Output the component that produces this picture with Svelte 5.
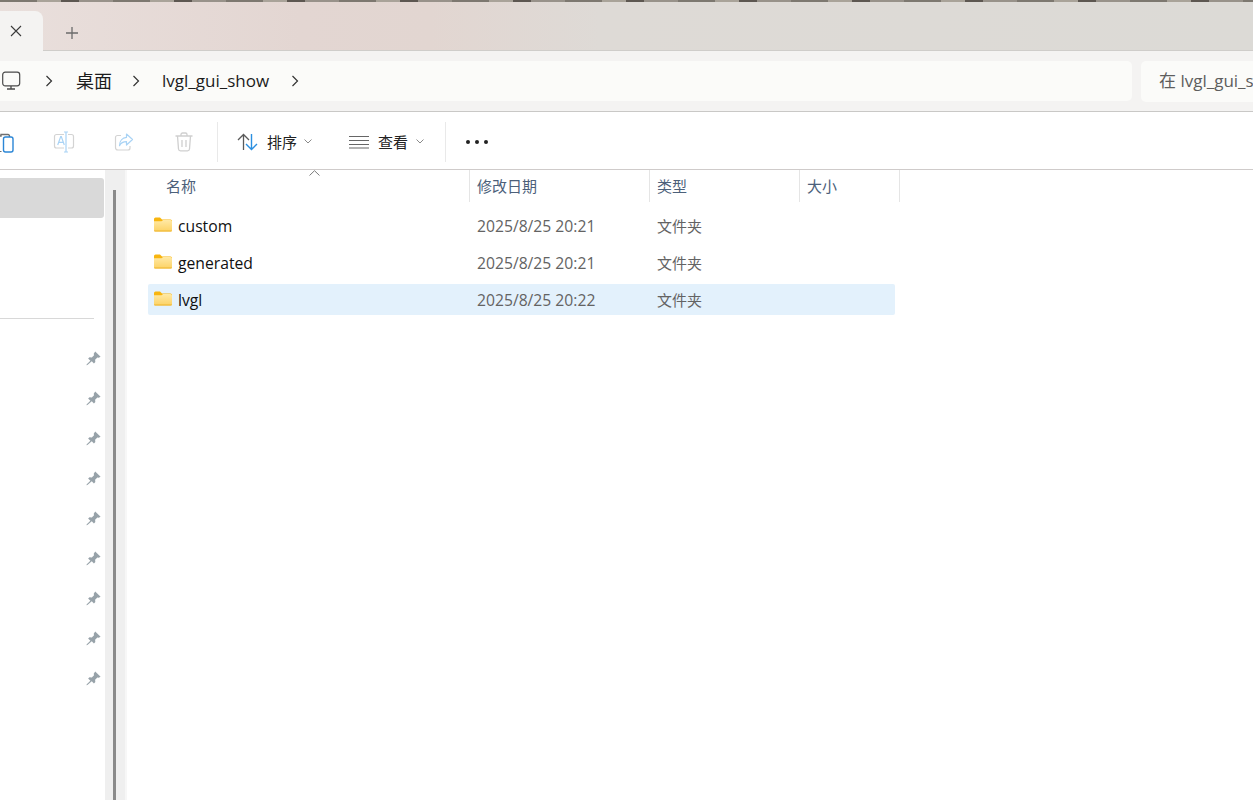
<script>
  const rows = [
    { name: 'custom', date: '2025/8/25 20:21' },
    { name: 'generated', date: '2025/8/25 20:21' },
    { name: 'lvgl', date: '2025/8/25 20:22', selected: true }
  ];
  const cols = [
    { label: '名称', cls: 'c-name' },
    { label: '修改日期', cls: 'c-date' },
    { label: '类型', cls: 'c-type' },
    { label: '大小', cls: 'c-size' }
  ];
  const pins = Array.from({ length: 9 }, (_, i) => i);
</script>

<div class="window">
  <div class="strip"></div>
  <div class="titlebar">
    <div class="tab">
      <svg class="close" width="12" height="12" viewBox="0 0 12 12"><path d="M1 1l10 10M11 1L1 11" stroke="#3a3a3a" stroke-width="1.1" fill="none"/></svg>
    </div>
    <div class="newtab">
      <svg width="14" height="14" viewBox="0 0 14 14"><path d="M7 1v12M1 7h12" stroke="#6b6b6b" stroke-width="1.3" fill="none"/></svg>
    </div>
  </div>

  <div class="addressrow">
    <div class="address">
      <svg class="pc" width="20" height="20" viewBox="0 0 20 20"><rect x="1.7" y="1.2" width="17" height="13.6" rx="2.5" fill="none" stroke="#4a4a4a" stroke-width="1.2"/><path d="M10 15v2.6M6 18h8" stroke="#4a4a4a" stroke-width="1.3" fill="none"/></svg>
      <svg class="chev first" width="8" height="12" viewBox="0 0 8 12"><path d="M1.5 1l5 5-5 5" stroke="#333" stroke-width="1.2" fill="none"/></svg>
      <span class="crumb desk">桌面</span>
      <svg class="chev second" width="8" height="12" viewBox="0 0 8 12"><path d="M1.5 1l5 5-5 5" stroke="#333" stroke-width="1.2" fill="none"/></svg>
      <span class="crumb show">lvgl_gui_show</span>
      <svg class="chev third" width="8" height="12" viewBox="0 0 8 12"><path d="M1.5 1l5 5-5 5" stroke="#333" stroke-width="1.2" fill="none"/></svg>
    </div>
    <div class="search">在 lvgl_gui_show 中搜索</div>
  </div>

  <div class="toolbar">
    <div class="tool">
      <svg width="20" height="22" viewBox="0 0 20 22"><path d="M6 5h1V3.500h7a1.500 1.500 0 0 1 1.500 1.500v1" stroke="#6f6f6f" stroke-width="1.4" fill="none"/><rect x="9.500" y="6" width="9.500" height="15" rx="2" fill="none" stroke="#2b86d6" stroke-width="1.4"/><path d="M6 20.500h1.500" stroke="#6f6f6f" stroke-width="1.2"/></svg>
    </div>
    <div class="tool">
      <svg width="22" height="22" viewBox="0 0 22 22"><path d="M11 3.500H3.500a2 2 0 0 0-2 2v9.500a2 2 0 0 0 2 2H11M15 3.500h3.500a2 2 0 0 1 2 2v9.500a2 2 0 0 1-2 2H15" stroke="#d3d3d3" stroke-width="1.2" fill="none"/><path d="M13 1v20M11 1h4M11 21h4" stroke="#a9d3f5" stroke-width="1.2" fill="none"/><path d="M4.700 14l3-8.500h.6l3 8.500M5.700 11.300h5" stroke="#a9d3f5" stroke-width="1.200" fill="none"/></svg>
    </div>
    <div class="tool">
      <svg width="20" height="20" viewBox="0 0 20 20"><path d="M7 3.500H3.500a2 2 0 0 0-2 2v10a2.500 2.500 0 0 0 2.500 2.500h10a2 2 0 0 0 2-2v-2" stroke="#d3d3d3" stroke-width="1.2" fill="none"/><path d="M12.500 2l6 5.500-6 5.500V9.700c-3 0-5.500 1-7 4 0-5 3-8 7-8.300z" stroke="#a9d3f5" stroke-width="1.200" fill="none" stroke-linejoin="round"/></svg>
    </div>
    <div class="tool">
      <svg width="18" height="20" viewBox="0 0 18 20"><path d="M0.500 4h17M6 4V2.500a1.500 1.500 0 0 1 1.500-1.500h3a1.500 1.500 0 0 1 1.500 1.500V4M2.500 4l1 13a2 2 0 0 0 2 1.800h7a2 2 0 0 0 2-1.800l1-13M7 8v7M11 8v7" stroke="#cfcfcf" stroke-width="1.3" fill="none"/></svg>
    </div>
    <div class="sep s1"></div>
    <div class="menu sort">
      <svg width="21" height="18" viewBox="0 0 21 18"><path d="M6.500 17V1.500M1 7l5.500-5.500L12 7" stroke="#5a5a5a" stroke-width="1.3" fill="none"/><path d="M14.500 1v15.500M9 11l5.500 5.500L20 11" stroke="#2b8fe0" stroke-width="1.4" fill="none"/></svg>
      <span>排序</span>
      <svg class="caret" width="8" height="5" viewBox="0 0 8 5"><path d="M.5.500L4 4 7.500.500" stroke="#8a8a8a" fill="none"/></svg>
    </div>
    <div class="menu view">
      <svg width="20" height="14" viewBox="0 0 20 14"><path d="M0 1.500h20M0 5.500h20M0 9.500h20M0 13h20" stroke="#666" stroke-width="1.100" fill="none"/></svg>
      <span>查看</span>
      <svg class="caret" width="8" height="5" viewBox="0 0 8 5"><path d="M.5.500L4 4 7.500.500" stroke="#8a8a8a" fill="none"/></svg>
    </div>
    <div class="sep s2"></div>
    <div class="dots"><i></i><i></i><i></i></div>
  </div>

  <div class="body">
    <aside class="sidebar">
      <div class="navsel"></div>
      <div class="rule"></div>
      <div class="pins">
        {#each pins as p (p)}
          <div class="pinrow">
            <svg width="15" height="15" viewBox="0 0 14 14"><path d="M8.600.400l5 5-1.700 1-1.300-.3-2.100 2.100.2 2.100-1.300 1.300-2-2.100L1.300 13l-.9.300.3-.9 3.400-3.300-2.100-2 1.300-1.300 2.100.2 2.100-2.100-.3-1.300z" fill="#97a2a9"/></svg>
          </div>
        {/each}
      </div>
    </aside>
    <div class="scrolltrack"><div class="thumb"></div></div>
    <main class="list">
      <div class="sortarrow">
        <svg width="11" height="6" viewBox="0 0 11 6"><path d="M.5 5.500L5.500.700l5 4.800" stroke="#7a7a7a" fill="none"/></svg>
      </div>
      <div class="head">
        {#each cols as c (c.label)}
          <div class="hcell {c.cls}">{c.label}</div>
        {/each}
      </div>
      <div class="rows">
        {#each rows as r (r.name)}
          <div class="row" class:selected={r.selected}>
            <svg class="folder" width="18" height="15" viewBox="0 0 18 15">
              <defs>
                <linearGradient id="fold-{r.name}" x1="0" y1="0" x2="0" y2="1">
                  <stop offset="0" stop-color="#ffe9a6"/>
                  <stop offset="1" stop-color="#fcd264"/>
                </linearGradient>
              </defs>
              <path d="M0 2a1.500 1.500 0 0 1 1.500-1.500H6L8 2.500h8.500A1.500 1.500 0 0 1 18 4v2H0z" fill="#f8b50f"/>
              <path d="M0 4.200h7.500L9.200 3H16.500A1.500 1.500 0 0 1 18 4.500v8.700a1.300 1.300 0 0 1-1.300 1.300H1.300A1.300 1.300 0 0 1 0 13.200z" fill="url(#fold-{r.name})"/>
              <path d="M0 13.500h18v.2a1 1 0 0 1-1 .8H1a1 1 0 0 1-1-.8z" fill="#eeb32c"/>
            </svg>
            <span class="name">{r.name}</span>
            <span class="date">{r.date}</span>
            <span class="type">文件夹</span>
          </div>
        {/each}
      </div>
    </main>
  </div>
</div>

<style>
  :global(body) { margin: 0; overflow: hidden; background: #fff; }
  .window {
    width: 1253px;
    height: 800px;
    overflow: hidden;
    display: flex;
    flex-direction: column;
    font-family: "Open Sans", "Noto Sans CJK SC", sans-serif;
    font-size: 15.7px;
    color: #1a1a1a;
  }
  .strip {
    height: 2px;
    background: repeating-linear-gradient(90deg, #7d7870 0 37px, #a9a399 37px 61px, #5d5751 61px 79px, #98928a 79px 113px);
  }
  .titlebar {
    height: 49px;
    box-sizing: border-box;
    border-bottom: 1px solid #cfcdca;
    display: flex;
    padding-top: 9px;
    background: linear-gradient(90deg, #e9dfdc 0, #e3d6d2 300px, #e2d6d1 430px, #dedad6 600px, #dcdad6 100%);
  }
  .tab {
    width: 43px;
    height: 40px;
    background: #f4f3f2;
    border-radius: 0 8px 0 0;
    display: flex;
    align-items: flex-start;
    justify-content: flex-start;
    position: relative;
    z-index: 1;
  }
  .close { margin: 14px 0 0 10px; }
  .newtab { margin: 12px 0 0 22px; height: 14px; }
  .addressrow {
    height: 61px;
    box-sizing: border-box;
    border-bottom: 1px solid #c9c8c6;
    background: #f4f3f2;
    padding-top: 10px;
    display: flex;
    gap: 9px;
  }
  .address {
    width: 1132px;
    height: 40px;
    background: #fbfbf9;
    border-radius: 0 5px 5px 0;
    display: flex;
    align-items: center;
    flex: none;
  }
  .pc { margin-left: 1px; }
  .chev { margin-left: 24px; }
  .chev.second { margin-left: 20px; }
  .chev.third { margin-left: 22px; }
  .crumb { font-size: 17px; line-height: 24px; color: #1c1c1c; }
  .desk { margin-left: 23px; font-size: 18px; }
  .show { margin-left: 22px; }
  .search {
    flex: none;
    width: 300px;
    height: 41px;
    box-sizing: border-box;
    padding-left: 18px;
    line-height: 40px;
    background: #fbfbf9;
    border-radius: 5px 0 0 5px;
    font-size: 17px;
    color: #5e5e5e;
    white-space: nowrap;
  }
  .toolbar {
    height: 58px;
    box-sizing: border-box;
    border-bottom: 1px solid #cfcbca;
    background: #fff;
    display: flex;
    align-items: center;
    margin-left: -26px;
    width: 1279px;
    padding-top: 2px;
  }
  .tool {
    width: 60px;
    display: flex;
    justify-content: center;
    align-items: center;
  }
  .sep { width: 1px; height: 40px; background: #e9e9e9; flex: none; }
  .s1 { margin-left: 3px; }
  .menu { display: flex; align-items: center; font-size: 15px; color: #222; flex: none; }
  .sort { margin-left: 19px; }
  .sort span { margin-left: 9px; }
  .sort .caret { margin-left: 7px; }
  .view { margin-left: 37px; }
  .view span { margin-left: 9px; }
  .view .caret { margin-left: 8px; }
  .s2 { margin-left: 21px; }
  .dots { margin-left: 20px; display: flex; gap: 5px; }
  .dots i { width: 4px; height: 4px; background: #222; border-radius: 50%; display: block; }
  .body {
    flex: 1;
    min-height: 0;
    display: flex;
  }
  .sidebar { width: 105px; flex: none; padding-top: 8px; box-sizing: border-box; }
  .navsel { width: 104px; height: 40px; background: #d9d9d9; border-radius: 0 3px 3px 0; }
  .rule { width: 94px; height: 1px; background: #d8d8d8; margin-top: 100px; }
  .pins { margin-top: 19px; }
  .pinrow {
    width: 94px;
    height: 40px;
    display: flex;
    align-items: center;
    justify-content: flex-end;
  }
  .pinrow svg { margin-right: -7px; }
  .scrolltrack {
    width: 20px;
    flex: none;
    background: #efefef;
    border-right: 2px solid #f7f7f7;
    position: relative;
  }
  .thumb {
    position: absolute;
    left: 8px;
    width: 3px;
    top: 20px;
    bottom: 0;
    background: #8a8a8a;
  }
  .list { flex: 1; min-width: 0; position: relative; padding-left: 21px; }
  .sortarrow { position: absolute; left: 182px; top: 0; line-height: 0; }
  .head { display: flex; height: 32px; }
  .hcell {
    box-sizing: border-box;
    height: 32px;
    border-right: 1px solid #e5e5e5;
    padding-left: 7px;
    font-size: 15px;
    line-height: 32px;
    color: #4c607a;
  }
  .c-name { width: 322px; padding-left: 18px; }
  .c-date { width: 180px; }
  .c-type { width: 150px; }
  .c-size { width: 100px; }
  .rows { padding-top: 8px; display: flex; flex-direction: column; gap: 6px; }
  .row {
    width: 747px;
    height: 31px;
    display: flex;
    align-items: center;
    border-radius: 2px;
    position: relative;
  }
  .row.selected { background: #e3f1fc; }
  .folder { margin-left: 6px; margin-top: -3px; flex: none; }
  .name { margin-left: 6px; width: 299px; flex: none; color: #101010; }
  .date { width: 180px; flex: none; font-size: 15.7px; color: #636363; }
  .type { font-size: 15px; color: #636363; }
</style>
